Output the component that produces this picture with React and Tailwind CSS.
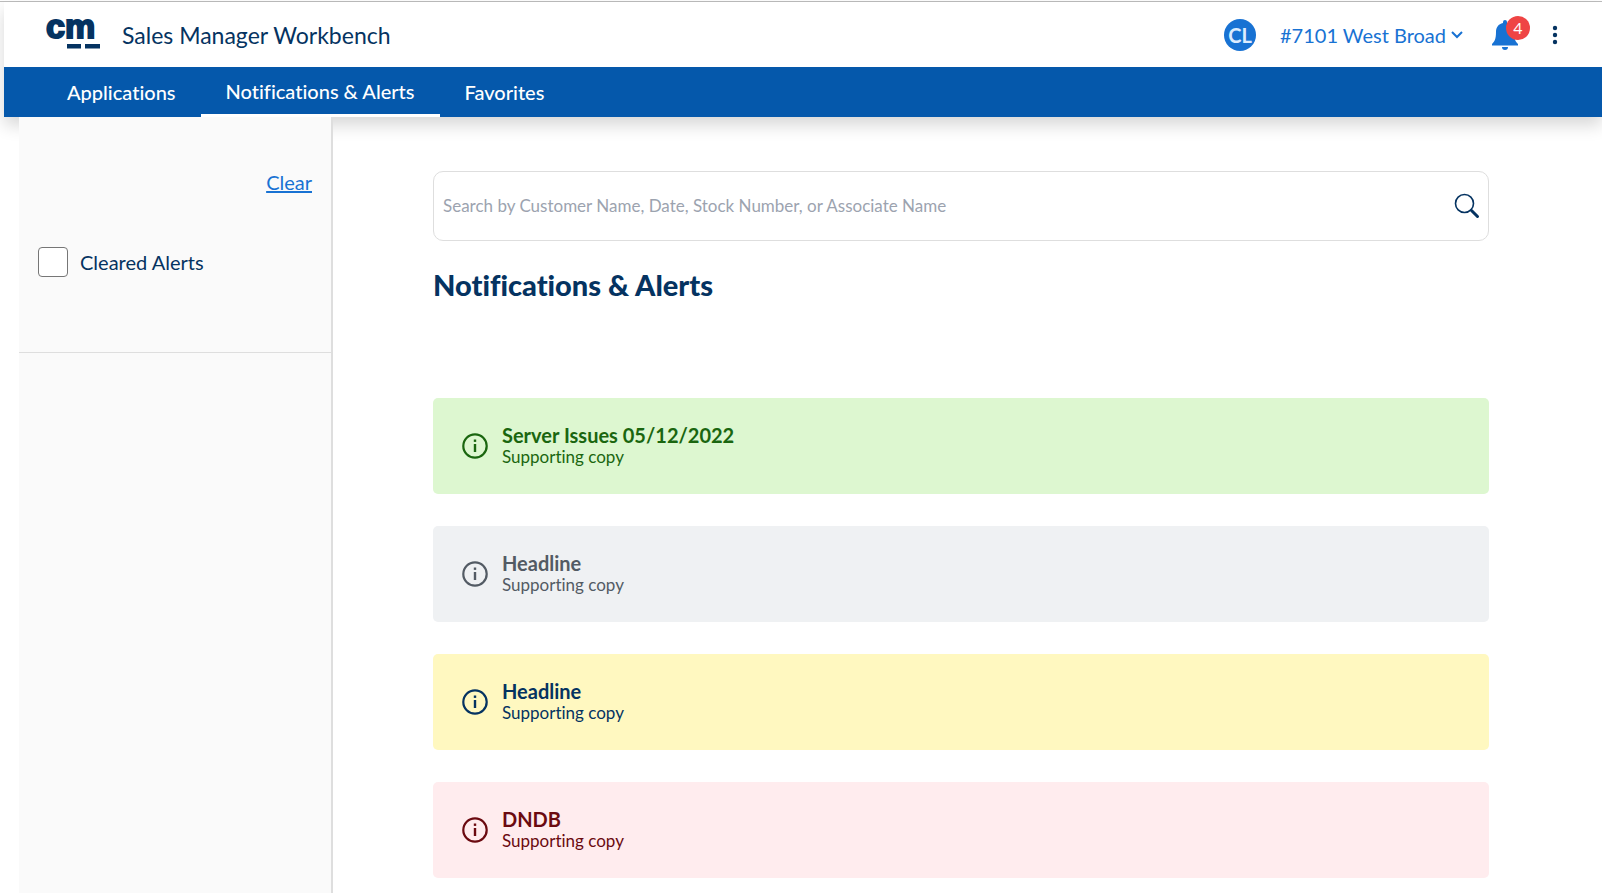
const ALERTS = [
  { id: 1, title: "Server Issues 05/12/2022", tone: "bg-[#ddf7d0] text-[#1a660f]" },
  { id: 2, title: "Headline", tone: "bg-[#eff1f3] text-[#535b64]" },
  { id: 3, title: "Headline", tone: "bg-[#fff8c0] text-[#053361]" },
  { id: 4, title: "DNDB", tone: "bg-[#ffecee] text-[#6b0a10]" },
];

function Logo() {
  return (
    <svg width="56" height="57" viewBox="0 0 56 57" role="img" aria-label="cm" className="shrink-0 fill-[#053361]">
      <text
        x="0"
        y="32"
        fontFamily="'Liberation Sans', Arial, sans-serif"
        fontWeight="700"
        fontSize="34"
        stroke="#053361"
        strokeWidth="2"
      >
        cm
      </text>
      <rect x="21" y="38" width="14" height="4.500" />
      <rect x="39" y="38" width="15" height="4.500" />
    </svg>
  );
}

function BellIcon() {
  return (
    <svg width="26" height="30" viewBox="0 0 26 30" aria-hidden="true" className="fill-[#1872d3]">
      <path d="M13 0a2 2 0 0 0-2 2v1C6.300 4 4 7.500 4 12c0 7-1.400 9.500-4 12v1.500h26V24c-2.600-2.500-4-5-4-12 0-4.500-2.300-8-7-9V2a2 2 0 0 0-2-2z" />
      <path d="M10 27h6a3 3 0 0 1-6 0z" />
    </svg>
  );
}

function InfoIcon() {
  return (
    <svg width="26" height="26" viewBox="0 0 26 26" aria-hidden="true" className="shrink-0">
      <circle cx="13" cy="13" r="11.700" fill="none" stroke="currentColor" strokeWidth="2.200" />
      <rect x="11.800" y="6.500" width="2.400" height="2.400" fill="currentColor" />
      <rect x="11.800" y="11" width="2.400" height="8" fill="currentColor" />
    </svg>
  );
}

function SearchIcon() {
  return (
    <svg width="26" height="26" viewBox="0 0 26 26" aria-hidden="true" fill="none" stroke="#053361">
      <circle cx="10.500" cy="10.500" r="9" strokeWidth="1.600" />
      <path d="M17.500 17.500l6 6" strokeWidth="3" strokeLinecap="round" />
    </svg>
  );
}

function Header() {
  return (
    <header className="relative ml-1 shadow-[0_8px_16px_rgba(0,0,0,0.16)]">
      <div className="flex h-[65px] items-center bg-white pr-11 pl-[42px]">
        <Logo />
        <span className="ml-5 text-[23px] leading-8">Sales Manager Workbench</span>
        <div className="ml-auto flex items-center text-[#1872d3]">
          <span className="flex size-8 items-center justify-center rounded-full bg-[#1872d3] text-xl font-bold text-[#dcecff]">
            CL
          </span>
          <button type="button" className="ml-6 flex items-center gap-1 text-xl">
            #7101 West Broad
            <svg width="14" height="14" viewBox="0 0 14 14" aria-hidden="true" fill="none" stroke="currentColor" strokeWidth="2">
              <path d="M2 4l5 5 5-5" />
            </svg>
          </button>
          <button type="button" aria-label="4 notifications" className="relative ml-7">
            <BellIcon />
            <span className="absolute -top-1 left-[14px] flex size-6 items-center justify-center rounded-full bg-[#ef4444] text-base leading-none text-white">
              4
            </span>
          </button>
          <button type="button" aria-label="More options" className="ml-[34px]">
            <svg width="6" height="20" viewBox="0 0 6 20" aria-hidden="true" className="fill-[#053361]">
              <circle cx="3" cy="3" r="2.200" />
              <circle cx="3" cy="10" r="2.200" />
              <circle cx="3" cy="17" r="2.200" />
            </svg>
          </button>
        </div>
      </div>
      <nav className="flex h-[50px] bg-[#0558ab] pl-[38px] text-xl font-medium text-white">
        <a href="#applications" className="flex items-center px-[25px]">Applications</a>
        <a href="#notifications" aria-current="page" className="flex items-center border-b-3 border-white px-[25px]">
          Notifications &amp; Alerts
        </a>
        <a href="#favorites" className="flex items-center px-[25px]">Favorites</a>
      </nav>
    </header>
  );
}

function Sidebar() {
  return (
    <aside className="relative w-[314px] shrink-0 border-r-2 border-[#dedede] bg-[#fafafa] text-xl">
      <div className="flex h-[236px] flex-col border-b border-[#dedede] pt-[51px] pr-[19px] pl-[19px]">
        <button type="button" className="self-end text-[#1872d3] underline">Clear</button>
        <label className="mt-[51px] flex items-center gap-3">
          <input type="checkbox" className="size-[30px] appearance-none rounded-sm border border-[#767676] bg-white checked:bg-[#1872d3]" />
          Cleared Alerts
        </label>
      </div>
    </aside>
  );
}

export default function App() {
  return (
    <div className="flex min-h-screen flex-col border-t border-white bg-white font-['Lato',sans-serif] text-[#053361] [font-variant-ligatures:no-common-ligatures]">
      <div className="h-px bg-[#bdbdbd]" />
      <Header />
      <div className="flex grow">
        <div className="w-[19px] shrink-0" />
        <Sidebar />
        <main className="grow pt-[54px] pr-[113px] pb-4 pl-[100px]">
          <form role="search" className="flex h-[70px] items-center rounded-[10px] border border-[#dedede] pr-2 pl-[9px]">
            <input
              type="text"
              aria-label="Search alerts"
              placeholder="Search by Customer Name, Date, Stock Number, or Associate Name"
              className="grow text-[17px] leading-[22px] outline-none placeholder:text-[#9ca3af]"
            />
            <button type="submit" aria-label="Search"><SearchIcon /></button>
          </form>
          <h1 className="mt-6 text-[29px] leading-10 font-black">Notifications &amp; Alerts</h1>
          <ul className="mt-[93px] flex flex-col gap-8">
            {ALERTS.map((alert) => (
              <li key={alert.id} className={`flex h-24 items-center gap-[14px] rounded-[5px] px-[29px] ${alert.tone}`}>
                <InfoIcon />
                <div>
                  <h2 className="text-xl leading-[22px] font-bold">{alert.title}</h2>
                  <p className="text-[17px] leading-[22px]">Supporting copy</p>
                </div>
              </li>
            ))}
          </ul>
        </main>
      </div>
    </div>
  );
}
